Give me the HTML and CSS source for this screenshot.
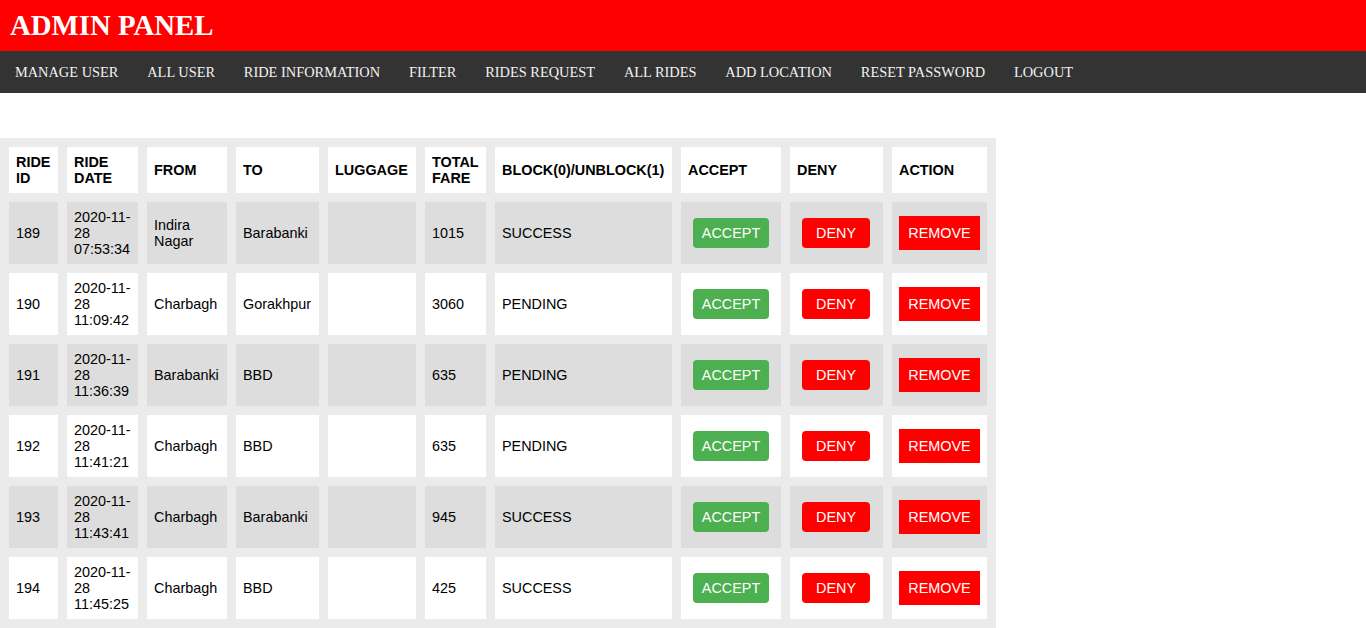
FILE: index.html
```html
<!DOCTYPE html>
<html lang="en">
<head>
<meta charset="utf-8">
<title>Admin Panel</title>
<link rel="stylesheet" href="styles.css">
</head>
<body>
<header class="topbar">
  <h1 class="title">ADMIN PANEL</h1>
</header>
<nav class="nav">
  <a href="#">MANAGE USER</a>
  <a href="#">ALL USER</a>
  <a href="#">RIDE INFORMATION</a>
  <a href="#">FILTER</a>
  <a href="#">RIDES REQUEST</a>
  <a href="#">ALL RIDES</a>
  <a href="#">ADD LOCATION</a>
  <a href="#">RESET PASSWORD</a>
  <a href="#">LOGOUT</a>
</nav>
<main class="content">
  <table class="rides">
    <colgroup>
      <col class="c-id"><col class="c-date"><col class="c-from"><col class="c-to"><col class="c-lug">
      <col class="c-fare"><col class="c-status"><col class="c-accept"><col class="c-deny"><col class="c-action">
    </colgroup>
    <thead>
      <tr>
        <th>RIDE ID</th><th>RIDE DATE</th><th>FROM</th><th>TO</th><th>LUGGAGE</th>
        <th>TOTAL FARE</th><th>BLOCK(0)/UNBLOCK(1)</th><th>ACCEPT</th><th>DENY</th><th>ACTION</th>
      </tr>
    </thead>
    <tbody>
      <tr class="odd">
        <td>189</td><td>2020-11-28 07:53:34</td><td>Indira Nagar</td><td>Barabanki</td><td></td>
        <td>1015</td><td>SUCCESS</td>
        <td class="btn-cell"><button class="btn accept">ACCEPT</button></td>
        <td class="btn-cell"><button class="btn deny">DENY</button></td>
        <td class="btn-cell"><button class="btn remove">REMOVE</button></td>
      </tr>
      <tr>
        <td>190</td><td>2020-11-28 11:09:42</td><td>Charbagh</td><td>Gorakhpur</td><td></td>
        <td>3060</td><td>PENDING</td>
        <td class="btn-cell"><button class="btn accept">ACCEPT</button></td>
        <td class="btn-cell"><button class="btn deny">DENY</button></td>
        <td class="btn-cell"><button class="btn remove">REMOVE</button></td>
      </tr>
      <tr class="odd">
        <td>191</td><td>2020-11-28 11:36:39</td><td>Barabanki</td><td>BBD</td><td></td>
        <td>635</td><td>PENDING</td>
        <td class="btn-cell"><button class="btn accept">ACCEPT</button></td>
        <td class="btn-cell"><button class="btn deny">DENY</button></td>
        <td class="btn-cell"><button class="btn remove">REMOVE</button></td>
      </tr>
      <tr>
        <td>192</td><td>2020-11-28 11:41:21</td><td>Charbagh</td><td>BBD</td><td></td>
        <td>635</td><td>PENDING</td>
        <td class="btn-cell"><button class="btn accept">ACCEPT</button></td>
        <td class="btn-cell"><button class="btn deny">DENY</button></td>
        <td class="btn-cell"><button class="btn remove">REMOVE</button></td>
      </tr>
      <tr class="odd">
        <td>193</td><td>2020-11-28 11:43:41</td><td>Charbagh</td><td>Barabanki</td><td></td>
        <td>945</td><td>SUCCESS</td>
        <td class="btn-cell"><button class="btn accept">ACCEPT</button></td>
        <td class="btn-cell"><button class="btn deny">DENY</button></td>
        <td class="btn-cell"><button class="btn remove">REMOVE</button></td>
      </tr>
      <tr>
        <td>194</td><td>2020-11-28 11:45:25</td><td>Charbagh</td><td>BBD</td><td></td>
        <td>425</td><td>SUCCESS</td>
        <td class="btn-cell"><button class="btn accept">ACCEPT</button></td>
        <td class="btn-cell"><button class="btn deny">DENY</button></td>
        <td class="btn-cell"><button class="btn remove">REMOVE</button></td>
      </tr>
    </tbody>
  </table>
</main>
</body>
</html>
```
FILE: styles.css
```css
html, body {
  margin: 0;
  padding: 0;
  background: #ffffff;
}

.topbar {
  background: #ff0000;
  height: 51px;
  display: flex;
  align-items: center;
  padding: 0 10px;
}

.title {
  margin: 0;
  color: #ffffff;
  font-family: "Liberation Serif", "Times New Roman", serif;
  font-weight: bold;
  font-size: 28.8px;
  line-height: 1;
}

.nav {
  background: #333333;
  height: 42px;
  display: flex;
  align-items: center;
  padding-left: 0.5px;
}

.nav a {
  color: #f2f2f2;
  text-decoration: none;
  font-family: "Liberation Serif", "Times New Roman", serif;
  font-size: 14.4px;
  padding: 1px 14.4px 0;
  line-height: 41px;
}

.content {
  padding-top: 45px;
}

.rides {
  width: 996px;
  table-layout: fixed;
  border-spacing: 9px;
  background: #ebebeb;
  font-family: "Liberation Sans", Arial, sans-serif;
  font-size: 14.4px;
  line-height: 16px;
  color: #000000;
}

.c-id { width: 49px; }
.c-date { width: 71px; }
.c-from { width: 80px; }
.c-to { width: 83px; }
.c-lug { width: 88px; }
.c-fare { width: 61px; }
.c-status { width: 177px; }
.c-accept { width: 100px; }
.c-deny { width: 93px; }
.c-action { width: 95px; }

.rides th,
.rides td {
  padding: 7px;
  text-align: left;
  vertical-align: middle;
  background: #ffffff;
}

.rides th {
  font-weight: bold;
}

.rides tr.odd td {
  background: #dddddd;
}

.rides td.btn-cell {
  text-align: center;
  padding: 7px 0;
}

.btn {
  font-family: "Liberation Sans", Arial, sans-serif;
  font-size: 14.4px;
  color: #ffffff;
  border: none;
  padding: 0;
  display: inline-block;
  vertical-align: middle;
  cursor: pointer;
}

.accept {
  background: #4caf50;
  width: 76px;
  height: 30px;
  border-radius: 4px;
}

.deny {
  background: #ff0000;
  width: 68px;
  height: 30px;
  border-radius: 4px;
  margin-right: 1px;
}

.remove {
  background: #ff0000;
  width: 81px;
  height: 34px;
}
```
